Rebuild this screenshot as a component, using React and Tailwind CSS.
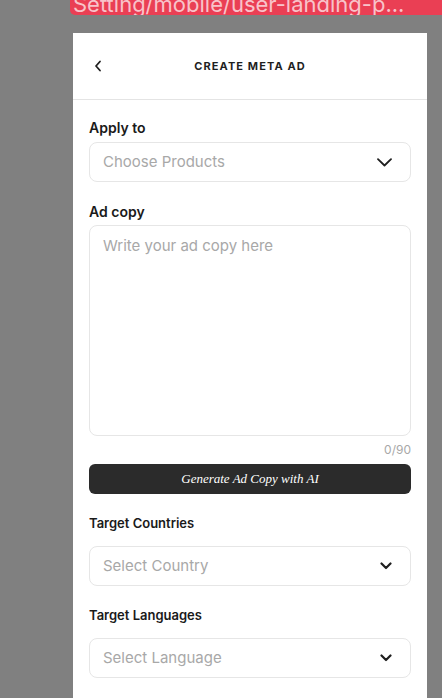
import React from "react";

function Chevron({ small }) {
  if (small) {
    return (
      <svg width="12" height="8" viewBox="0 0 12 8" fill="none" className="text-[#1f1f1f]">
        <path d="M1.5 1.5L6 6L10.5 1.5" stroke="currentColor" strokeWidth="2.2" strokeLinecap="round" strokeLinejoin="round" />
      </svg>
    );
  }
  return (
    <svg width="15" height="9" viewBox="0 0 15 9" fill="none" className="text-[#1f1f1f]">
      <path d="M1 1.2L7.5 7.5L14 1.2" stroke="currentColor" strokeWidth="1.8" strokeLinecap="round" strokeLinejoin="round" />
    </svg>
  );
}

function Select({ placeholder, small }) {
  return (
    <div className="flex h-10 items-center justify-between rounded-lg border border-[#e6e6e6] bg-white pl-[13px] pr-[18px]">
      <span className="text-[15px] text-[#a8a8a8]">{placeholder}</span>
      <Chevron small={small} />
    </div>
  );
}

export default function App() {
  return (
    <div className="h-[698px] overflow-hidden bg-[#808080]" style={{ fontFamily: "Inter, 'Noto Sans', sans-serif" }}>
      <div className="ml-[70px] h-[15px] overflow-hidden rounded-bl-[5px] bg-[#ea3f54] pl-[3px]">
        <div className="-mt-[7px] whitespace-nowrap text-[22px] leading-[22px] text-[#f8c3ca]">
          Setting/mobile/user-landing-p...
        </div>
      </div>

      <div className="ml-[73px] mt-[18px] w-[354px] bg-white">
        <div className="relative flex h-[67px] items-center justify-center border-b border-[#e4e4e4]">
          <svg width="8" height="12" viewBox="0 0 8 12" fill="none" className="absolute left-[21px] top-[27px] text-[#1f1f1f]">
            <path d="M6 1.5L2 6L6 10.5" stroke="currentColor" strokeWidth="1.8" strokeLinecap="round" strokeLinejoin="round" />
          </svg>
          <span className="text-[11px] font-bold uppercase tracking-[0.1em] text-[#1f1f1f]">Create Meta Ad</span>
        </div>

        <div className="px-4 pt-[19px] pb-6">
          <label className="mb-[5px] block text-[14px] font-semibold leading-[18px] text-[#1a1a1a]">Apply to</label>
          <Select placeholder="Choose Products" />

          <label className="mb-[4px] mt-[21px] block text-[14px] font-semibold leading-[18px] text-[#1a1a1a]">Ad copy</label>
          <div className="h-[211px] rounded-lg border border-[#e6e6e6] px-[13px] pt-[7px]">
            <span className="text-[15px] text-[#a8a8a8]">Write your ad copy here</span>
          </div>
          <div className="mt-[6px] text-right text-[12px] leading-[16px] text-[#a8a8a8]">0/90</div>

          <button className="mt-[6px] flex h-[30px] w-full items-center justify-center rounded-md bg-[#2b2b2b] text-[13px] italic text-white" style={{ fontFamily: "'Liberation Serif', serif" }}>
            Generate Ad Copy with AI
          </button>

          <label className="mb-[14px] mt-[20px] block text-[13px] font-semibold leading-[18px] text-[#1a1a1a]">Target Countries</label>
          <Select placeholder="Select Country" small />

          <label className="mb-[14px] mt-[20px] block text-[13px] font-semibold leading-[18px] text-[#1a1a1a]">Target Languages</label>
          <Select placeholder="Select Language" small />
        </div>
      </div>
    </div>
  );
}
